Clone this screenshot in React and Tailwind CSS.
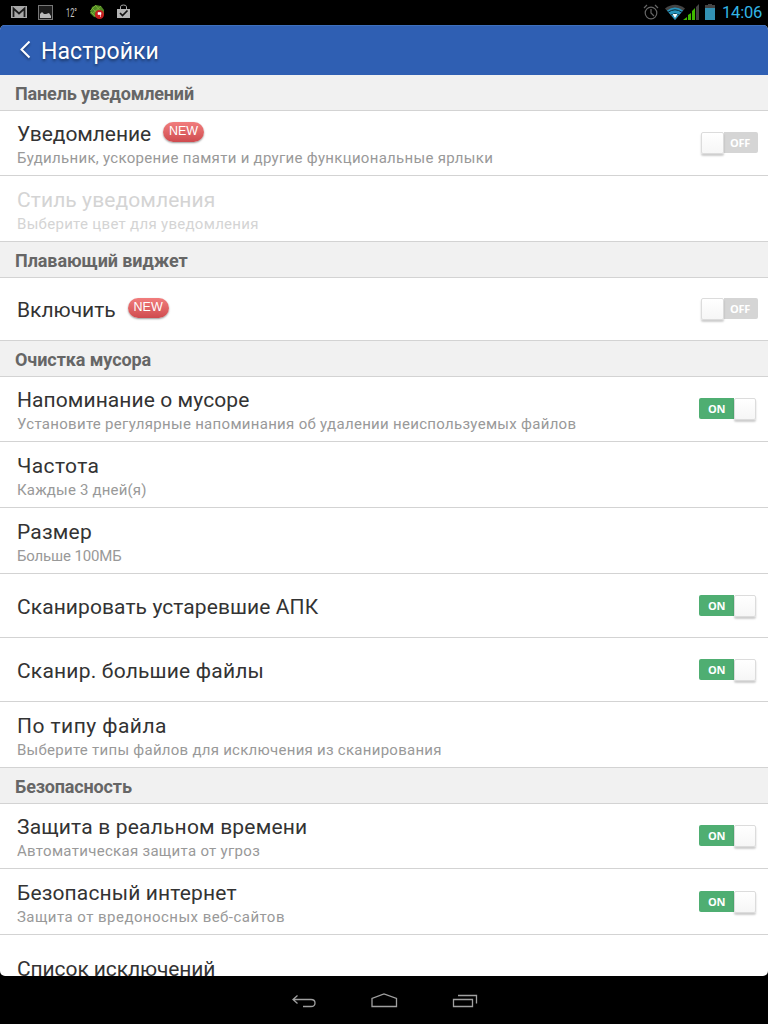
import React from "react";

function Toggle({ on }) {
  return on ? (
    <div className="mr-3 flex h-[22px] w-[57px] rounded-xs">
      <div className="flex h-[21px] w-[35px] items-center justify-center rounded-l-xs bg-[#4fae72] pt-0.5 font-['Open_Sans',sans-serif] text-[11px] font-bold tracking-[-0.3px] text-white">ON</div>
      <div className="h-[22px] w-[22px] rounded-xs border border-[#dcdcdc] bg-linear-to-b from-white to-[#f6f6f6] shadow-[0_2px_2px_rgba(0,0,0,0.2)]" />
    </div>
  ) : (
    <div className="mr-2.5 flex h-[22px] w-[57px]">
      <div className="z-10 h-[22px] w-[23px] rounded-xs border border-[#dcdcdc] bg-linear-to-b from-white to-[#f6f6f6] shadow-[0_2px_2px_rgba(0,0,0,0.2)]" />
      <div className="flex h-[21px] w-[34px] items-center justify-center rounded-r-xs bg-[#d5d5d5] pt-px pr-0.5 font-['Open_Sans',sans-serif] text-[11px] font-bold tracking-[-0.3px] text-white">OFF</div>
    </div>
  );
}

function Section({ children, tracking = "tracking-[-0.08px]" }) {
  return (
    <h2 className={`h-9 shrink-0 border-b border-[#d3d3d3] bg-[#f1f1f1] pl-[15px] text-[18px] leading-[37px] font-bold text-[#666] ${tracking}`}>
      {children}
    </h2>
  );
}

function Row({ title, sub, height, isNew, on, disabled, tracking = "tracking-[0.08px]", subTracking = "tracking-[0.3px]" }) {
  return (
    <div className={`flex shrink-0 items-center justify-between border-b border-[#d3d3d3] pl-[17px] ${height}`}>
      <div className={sub ? "pt-1" : "pt-0.5"}>
        <div className="flex items-center">
          <span className={`text-[21px] leading-[26px] ${tracking} ${disabled ? "text-[#d4d4d4]" : "text-[#333]"}`}>{title}</span>
          {isNew && (
            <span className="mb-[5px] ml-3 flex h-5 w-[41px] items-center justify-center rounded-full bg-linear-to-b from-[#f17d7d] to-[#cf4b4f] font-['Liberation_Sans',sans-serif] text-[12.5px] text-white shadow-[0_1px_2px_rgba(0,0,0,0.4)]">NEW</span>
          )}
        </div>
        {sub && <div className={`text-[15px] leading-[22px] ${subTracking} ${disabled ? "text-[#d4d4d4]" : "text-[#999]"}`}>{sub}</div>}
      </div>
      {on !== undefined && <Toggle on={on} />}
    </div>
  );
}

function StatusBar() {
  return (
    <div className="flex h-[25px] shrink-0 items-center justify-between bg-black">
      <svg width="140" height="25" viewBox="0 0 140 25">
        <rect x="11" y="6" width="16" height="12" fill="#a8a8a8" />
        <path d="M13.5 17V8.5l5.5 5 5.5-5V17" fill="none" stroke="#1c1c1c" strokeWidth="1.8" />
        <rect x="38.5" y="5.5" width="14" height="14" fill="#1c1c1c" stroke="#777" />
        <path d="M40 18v-4l2-2 2 2h2l3-1 2 3v2z" fill="#bbb" />
        <text x="66" y="16.5" textLength="11" lengthAdjust="spacingAndGlyphs" fontFamily="Roboto" fontSize="12" fill="#c5c5c5">12°</text>
        <path d="M92 7l4-2 5 1 3 4v5l-4 3-6-1-4-4z" fill="#518923" />
        <path d="M92 8l8 8M96 6l7 8M91 12l4 4M101 6l-9 8M96 5l-6 6" stroke="#8abb3d" strokeWidth="0.7" />
        <circle cx="99.5" cy="14.5" r="4.5" fill="#c51d20" />
        <path d="M98 12.5h3v2h-3zM100.5 13v4" stroke="#fff" strokeWidth="0.6" fill="#fff" />
        <path d="M117 9h13v9h-13z" fill="#b4b4b4" />
        <path d="M120.5 9V6.8q0-1.8 3-1.8t3 1.8V9" fill="none" stroke="#aaa" />
        <path d="M120 13l2.5 2.5 5-5" fill="none" stroke="#111" strokeWidth="1.7" />
      </svg>
      <div className="flex items-center">
        <svg width="80" height="25" viewBox="640 0 80 25" fill="none">
          <circle cx="651" cy="13" r="5.8" stroke="#666" strokeWidth="1.2" />
          <path d="M651 9v4l3 3M644 8l3-3M658 8l-3-3" stroke="#666" strokeWidth="1.2" />
          <path d="M665 8.5q10-7.5 20 0L675 20z" fill="#444" />
          <path d="M667 10.5q8-6 16 0L675 20z" fill="#2694bd" />
          <path d="M668 12.3q7-5 14 0M670.5 15.2q4.5-3 9 0" stroke="#0a252f" strokeWidth="1" />
          <path d="M672.5 14h5L675 18z" fill="#fff" />
          <path d="M683 20l4-3v3zM688 20v-5l3-2v7zM692 20v-9l3-3v12z" fill="#40b900" />
          <path d="M696 20V7l3-3v16z" fill="#444" />
          <path d="M705 5h3V4h4v1h3v3h-10z" fill="#444" />
          <path d="M705 8h10v12h-10z" fill="#3391b3" />
        </svg>
        <span className="w-12 pl-0.5 font-[Roboto,sans-serif] text-[16.5px] leading-[25px] tracking-[-0.2px] text-[#33b5e5]">14:06</span>
      </div>
    </div>
  );
}

export default function App() {
  return (
    <div className="flex h-[1024px] w-[768px] flex-col overflow-hidden bg-black font-[Roboto,sans-serif]">
      <StatusBar />
      <main className="flex h-[951px] shrink-0 flex-col overflow-hidden rounded-[5px] bg-white">
        <header className="flex h-[50px] shrink-0 items-center border-t border-[#3e70bd] bg-[#2f5fb3] pl-[19px]">
          <svg width="22" height="20" viewBox="0 0 22 20" className="drop-shadow-[0_2px_1px_rgba(0,0,0,0.35)]">
            <path d="M10.5 0.5L2.5 8.5l8 8" fill="none" stroke="#fff" strokeWidth="2" />
          </svg>
          <h1 className="pt-0.5 text-[23px] leading-8 tracking-[0.1px] text-white [text-shadow:0_2px_3px_rgba(0,0,0,0.45)]">Настройки</h1>
        </header>
        <Section tracking="tracking-[-0.15px]">Панель уведомлений</Section>
        <Row height="h-[65px]" title="Уведомление" tracking="tracking-[-0.08px]" sub="Будильник, ускорение памяти и другие функциональные ярлыки" isNew on={false} />
        <Row height="h-[66px]" title="Стиль уведомления" sub="Выберите цвет для уведомления" disabled />
        <Section>Плавающий виджет</Section>
        <Row height="h-[63px]" title="Включить" tracking="tracking-[-0.02px]" isNew on={false} />
        <Section>Очистка мусора</Section>
        <Row height="h-[65px]" title="Напоминание о мусоре" sub="Установите регулярные напоминания об удалении неиспользуемых файлов" on />
        <Row height="h-[66px]" title="Частота" tracking="tracking-[0.4px]" sub="Каждые 3 дней(я)" subTracking="tracking-[0.18px]" />
        <Row height="h-[66px]" title="Размер" tracking="tracking-[0.2px]" sub="Больше 100МБ" subTracking="tracking-[-0.15px]" />
        <Row height="h-[64px]" title="Сканировать устаревшие АПК" on />
        <Row height="h-[64px]" title="Сканир. большие файлы" tracking="tracking-[0.2px]" on />
        <Row height="h-[66px]" title="По типу файла" tracking="tracking-[0.45px]" sub="Выберите типы файлов для исключения из сканирования" subTracking="tracking-[0.27px]" />
        <Section tracking="tracking-[-0.15px]">Безопасность</Section>
        <Row height="h-[65px]" title="Защита в реальном времени" tracking="tracking-[0.18px]" sub="Автоматическая защита от угроз" on />
        <Row height="h-[66px]" title="Безопасный интернет" tracking="tracking-[0.14px]" sub="Защита от вредоносных веб-сайтов" subTracking="tracking-[0.46px]" on />
        <Row height="h-[66px]" title="Список исключений" tracking="tracking-[-0.1px]" />
      </main>
      <nav className="flex h-12 shrink-0 items-center justify-center">
        <svg width="192" height="48" viewBox="288 976 192 48" fill="none" stroke="#a0a0a0" strokeWidth="1.3">
          <path d="M297.5 995.5l-4.5 4 4.5 4M293 999.5h18q4 0 4 3.5t-4 3.5h-8" />
          <path d="M372 1006.5v-8l12-4.5 12.5 4.5v8z" />
          <path d="M453.5 999.5h19v7h-19zM458 995.5h18.5v8" />
        </svg>
      </nav>
    </div>
  );
}
